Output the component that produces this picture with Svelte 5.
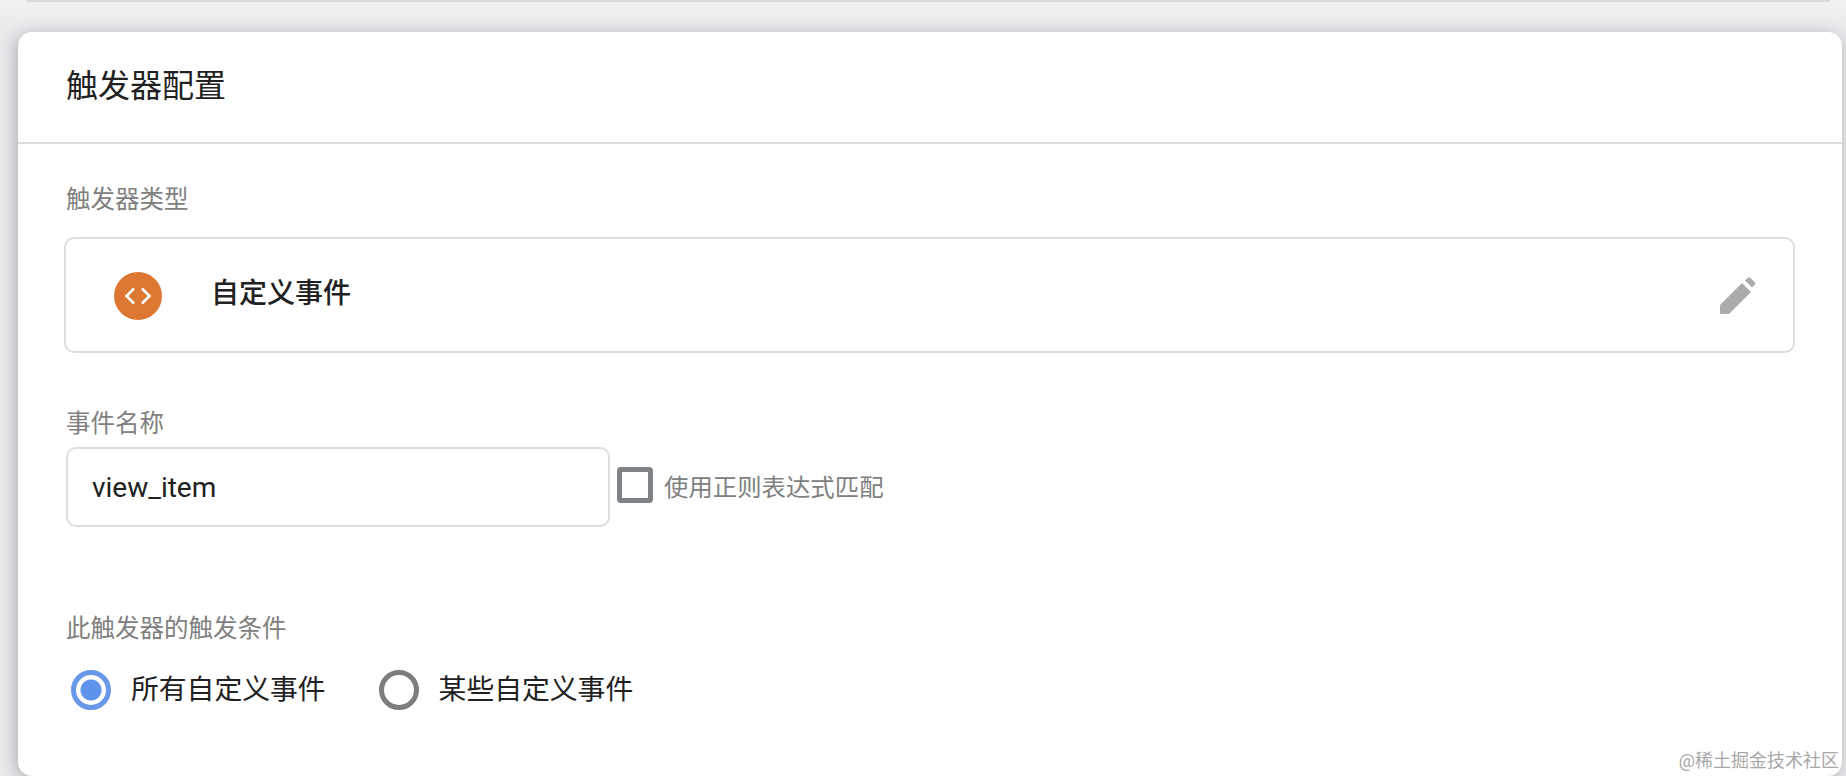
<script>
  let eventName = "view_item"
  let useRegex = false
  let scope = "all"
</script>

<div class="page">
  <div class="topbar"></div>

  <section class="card">
    <header class="card-title">触发器配置</header>

    <div class="card-body">
      <div class="label type-label">触发器类型</div>
      <div class="type-box">
        <span class="type-icon">
          <svg width="28" height="28" viewBox="0 0 28 28" fill="none" stroke="#fff" stroke-width="2.6">
            <path d="M10 6.500 L2.500 14 L10 21.500" />
            <path d="M18 6.500 L25.500 14 L18 21.500" />
          </svg>
        </span>
        <span class="type-name">自定义事件</span>
        <svg class="edit" width="38" height="38" viewBox="0 0 38 38" fill="#acacac">
          <path d="M2 37 V28 L24 6 L33 15 L11 37 Z" />
          <path d="M27 3.500 L30 .5 Q31 0 32 .5 L37 5.500 Q37.600 6.500 37 7.500 L34 10.500 Z" />
        </svg>
      </div>

      <div class="label name-label">事件名称</div>
      <div class="name-row">
        <input class="name-input" type="text" bind:value={eventName} />
        <label class="check">
          <input type="checkbox" bind:checked={useRegex} />
          <span class="box"></span>
          <span>使用正则表达式匹配</span>
        </label>
      </div>

      <div class="label cond-label">此触发器的触发条件</div>
      <div class="radios">
        <label class="radio" class:on={scope === "all"}>
          <input type="radio" bind:group={scope} value="all" />
          <span class="dot"></span>
          <span>所有自定义事件</span>
        </label>
        <label class="radio" class:on={scope === "some"}>
          <input type="radio" bind:group={scope} value="some" />
          <span class="dot"></span>
          <span>某些自定义事件</span>
        </label>
      </div>
    </div>

    <div class="watermark">@稀土掘金技术社区</div>
  </section>
</div>

<style>
  :global(body) {
    margin: 0;
    background: #f0f1f3;
  }

  .page {
    height: 776px;
    overflow: hidden;
    padding: 0 4px 0 18px;
    box-sizing: border-box;
    font-family: Roboto, "Noto Sans CJK SC", sans-serif;
    background: linear-gradient(#f0f1f3, #e9eaec 32px);
  }

  .topbar {
    height: 2px;
    margin: 0 12px 30px 9px;
    background: #d8dadc;
  }

  .card {
    position: relative;
    height: 744px;
    background: #fff;
    border-radius: 14px;
    box-shadow: -2px 3px 16px rgba(60, 64, 67, 0.36);
  }

  .card-title {
    height: 112px;
    box-sizing: border-box;
    padding: 32px 0 0 48px;
    font-size: 32px;
    line-height: 44px;
    color: #212121;
    border-bottom: 2px solid #dcdcdc;
  }

  .card-body {
    padding: 0 47px 0 46px;
  }

  .label {
    font-size: 24.5px;
    line-height: 34px;
    color: #808080;
    padding-left: 2px;
  }

  .type-label {
    padding-top: 39px;
  }

  .type-box {
    display: flex;
    align-items: center;
    height: 116px;
    margin-top: 20px;
    padding: 2px 37px 0 48px;
    box-sizing: border-box;
    border: 2px solid #dedede;
    border-radius: 10px;
  }

  .type-icon {
    display: flex;
    align-items: center;
    justify-content: center;
    width: 48px;
    height: 48px;
    border-radius: 50%;
    background: #dd7832;
  }

  .type-name {
    flex: 1;
    margin-left: 49px;
    margin-top: -10px;
    font-size: 28px;
    font-weight: 500;
    color: #212121;
  }

  .name-label {
    padding-top: 54px;
  }

  .name-row {
    display: flex;
    align-items: center;
    margin-top: 6px;
    padding-left: 2px;
  }

  .name-input {
    width: 544px;
    height: 80px;
    box-sizing: border-box;
    padding: 0 24px;
    border: 2px solid #dedede;
    border-radius: 10px;
    outline: none;
    font: 28px Roboto, sans-serif;
    color: #212121;
  }

  .check {
    display: flex;
    align-items: center;
    gap: 11px;
    margin-left: 7px;
    margin-top: -4px;
    font-size: 24.4px;
    color: #808080;
  }

  .check input,
  .radio input {
    display: none;
  }

  .box {
    width: 36px;
    height: 36px;
    box-sizing: border-box;
    border: 5px solid #7f8386;
    border-radius: 4px;
  }

  .cond-label {
    padding-top: 85px;
  }

  .radios {
    display: flex;
    margin-top: 24px;
    padding-left: 7px;
    gap: 53px;
  }

  .radio {
    display: flex;
    align-items: center;
    gap: 20px;
    font-size: 27.8px;
    line-height: 40px;
    color: #212121;
  }

  .dot {
    width: 40px;
    height: 40px;
    box-sizing: border-box;
    border: 5px solid #7d7d7d;
    border-radius: 50%;
  }

  .radio.on .dot {
    border-color: #6a98e8;
    background: radial-gradient(circle, #5f93ea 0 10px, #fff 11px);
  }

  .watermark {
    position: absolute;
    right: 3px;
    bottom: 4px;
    font-size: 18px;
    line-height: 22px;
    color: #a8a8a8;
  }
</style>
